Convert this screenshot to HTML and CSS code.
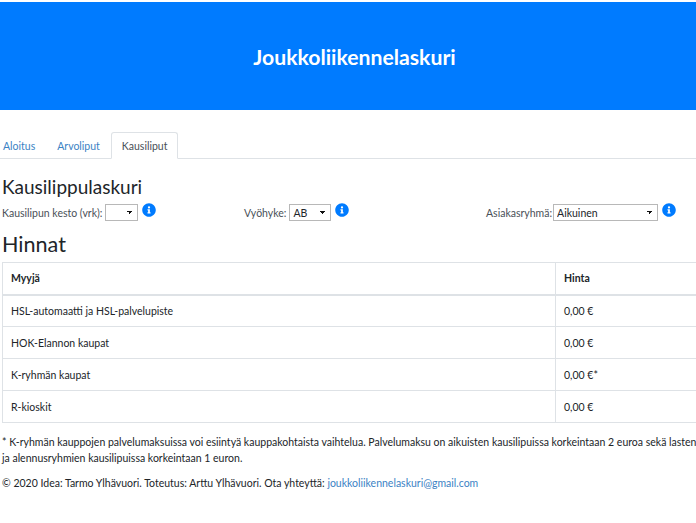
FILE: index.html
```html
<!DOCTYPE html>
<html lang="fi">
<head>
    <meta charset="UTF-8">
    <meta name="viewport" content="width=device-width, initial-scale=1.0">
    <title>Joukkoliikennelaskuri</title>
    <link rel="stylesheet" href="styles.css">
</head>
<body>
    <div class="page">
        <div class="jumbotron">
            <h1>Joukkoliikennelaskuri</h1>
        </div>

        <ul class="tabs">
            <li><a href="#" class="tab">Aloitus</a></li>
            <li><a href="#" class="tab">Arvoliput</a></li>
            <li><a href="#" class="tab active">Kausiliput</a></li>
        </ul>

        <h3>Kausilippulaskuri</h3>
        <div class="form-row">
            <div class="form-col">
                <label>Kausilipun kesto (vrk):</label>
                <select class="select-days"><option></option></select>
                <svg class="info" viewBox="0 0 512 512"><path d="M256 8C119 8 8 119 8 256s111 248 248 248 248-111 248-248S393 8 256 8zm0 110a42 42 0 1 1 0 84 42 42 0 0 1 0-84zm56 254c0 7-5 12-12 12h-88c-7 0-12-5-12-12v-24c0-7 5-12 12-12h12v-64h-12c-7 0-12-5-12-12v-24c0-7 5-12 12-12h64c7 0 12 5 12 12v100h12c7 0 12 5 12 12v24z"/></svg>
            </div>
            <div class="form-col">
                <label>Vyöhyke:</label>
                <select class="select-zone"><option>AB</option></select>
                <svg class="info" viewBox="0 0 512 512"><path d="M256 8C119 8 8 119 8 256s111 248 248 248 248-111 248-248S393 8 256 8zm0 110a42 42 0 1 1 0 84 42 42 0 0 1 0-84zm56 254c0 7-5 12-12 12h-88c-7 0-12-5-12-12v-24c0-7 5-12 12-12h12v-64h-12c-7 0-12-5-12-12v-24c0-7 5-12 12-12h64c7 0 12 5 12 12v100h12c7 0 12 5 12 12v24z"/></svg>
            </div>
            <div class="form-col">
                <label>Asiakasryhmä:</label>
                <select class="select-group"><option>Aikuinen</option></select>
                <svg class="info" viewBox="0 0 512 512"><path d="M256 8C119 8 8 119 8 256s111 248 248 248 248-111 248-248S393 8 256 8zm0 110a42 42 0 1 1 0 84 42 42 0 0 1 0-84zm56 254c0 7-5 12-12 12h-88c-7 0-12-5-12-12v-24c0-7 5-12 12-12h12v-64h-12c-7 0-12-5-12-12v-24c0-7 5-12 12-12h64c7 0 12 5 12 12v100h12c7 0 12 5 12 12v24z"/></svg>
            </div>
        </div>

        <h2>Hinnat</h2>
        <table class="prices">
            <thead>
                <tr><th>Myyjä</th><th class="col-price">Hinta</th></tr>
            </thead>
            <tbody>
                <tr><td>HSL-automaatti ja HSL-palvelupiste</td><td>0,00 €</td></tr>
                <tr><td>HOK-Elannon kaupat</td><td>0,00 €</td></tr>
                <tr><td>K-ryhmän kaupat</td><td>0,00 €*</td></tr>
                <tr><td>R-kioskit</td><td>0,00 €</td></tr>
            </tbody>
        </table>

        <p class="note">* K-ryhmän kauppojen palvelumaksuissa voi esiintyä kauppakohtaista vaihtelua. Palvelumaksu on aikuisten kausilipuissa korkeintaan 2 euroa sekä lasten ja alennusryhmien kausilipuissa korkeintaan 1 euron.</p>
        <p class="footer">© 2020 Idea: Tarmo Ylhävuori. Toteutus: Arttu Ylhävuori. Ota yhteyttä: <a href="#">joukkoliikennelaskuri@gmail.com</a></p>
    </div>
</body>
</html>
```
FILE: styles.css
```css
* {
    box-sizing: border-box;
}

html, body {
    margin: 0;
    padding: 0;
    overflow: hidden;
    background: white;
}

body {
    font-family: Lato, 'Open Sans', sans-serif;
    font-size: 10.5px;
    line-height: 16px;
    color: #212529;
}

.page {
    width: 730px;
    padding-top: 2px;
}

a {
    color: #3b82c4;
    text-decoration: none;
}

.jumbotron {
    background: #007bff;
    width: 709px;
    height: 108px;
    display: flex;
    align-items: center;
    justify-content: center;
    margin-bottom: 22px;
}

.jumbotron h1 {
    margin: 0;
    padding-top: 2px;
    color: white;
    font-size: 21.2px;
    font-weight: 700;
    line-height: 24px;
}

.tabs {
    list-style: none;
    margin: 0 0 17px;
    padding: 0;
    display: flex;
    height: 27px;
    border-bottom: 1px solid #dee2e6;
}

.tab {
    display: block;
    height: 27px;
    padding: 5px 10px;
    border: 1px solid transparent;
    border-radius: 3px 3px 0 0;
}

.tabs li:first-child .tab {
    padding-left: 2px;
}

.tab.active {
    color: #495057;
    background: white;
    border-color: #dee2e6 #dee2e6 white;
}

h3 {
    margin: 0 0 4px 2px;
    font-size: 19px;
    font-weight: 400;
    line-height: 22px;
}

h2 {
    margin: 8px 0 5px 2px;
    font-size: 21.6px;
    font-weight: 400;
    line-height: 26px;
}

.form-row {
    display: grid;
    grid-template-columns: 242px 242px 242px;
    margin-left: 2px;
    height: 21px;
}

.form-col {
    display: flex;
    align-items: center;
    gap: 2px;
    color: #495057;
}

.form-col select {
    appearance: none;
    height: 17px;
    font: inherit;
    color: #212529;
    border: 1px solid #b8b8b8;
    padding: 0 3px;
    background-color: white;
    background-image: linear-gradient(45deg, transparent 50%, #111 50%), linear-gradient(135deg, #111 50%, transparent 50%);
    background-size: 3px 3px;
    background-position: right 7px center, right 4px center;
    background-repeat: no-repeat;
}

.select-days {
    width: 33px;
    margin-left: 1px;
}

.select-zone {
    width: 42px;
    margin-left: 1px;
}

.select-group {
    width: 105px;
    margin-left: -1px;
}

.info {
    width: 14px;
    height: 14px;
    fill: #007bff;
    margin: -6px 0 0 2px;
}

.prices {
    width: 724px;
    margin: 0 0 11px 2px;
    border-collapse: collapse;
    border: 1px solid #dee2e6;
}

.prices th, .prices td {
    height: 32px;
    padding: 0 8px;
    text-align: left;
    border: 1px solid #dee2e6;
}

.prices th {
    border-bottom-width: 2px;
    font-weight: 700;
}

.col-price {
    width: 170px;
}

.note {
    margin: 0 0 9px 2px;
    line-height: 16px;
    width: 698px;
}

.footer {
    margin: 0 0 0 2px;
}
```
